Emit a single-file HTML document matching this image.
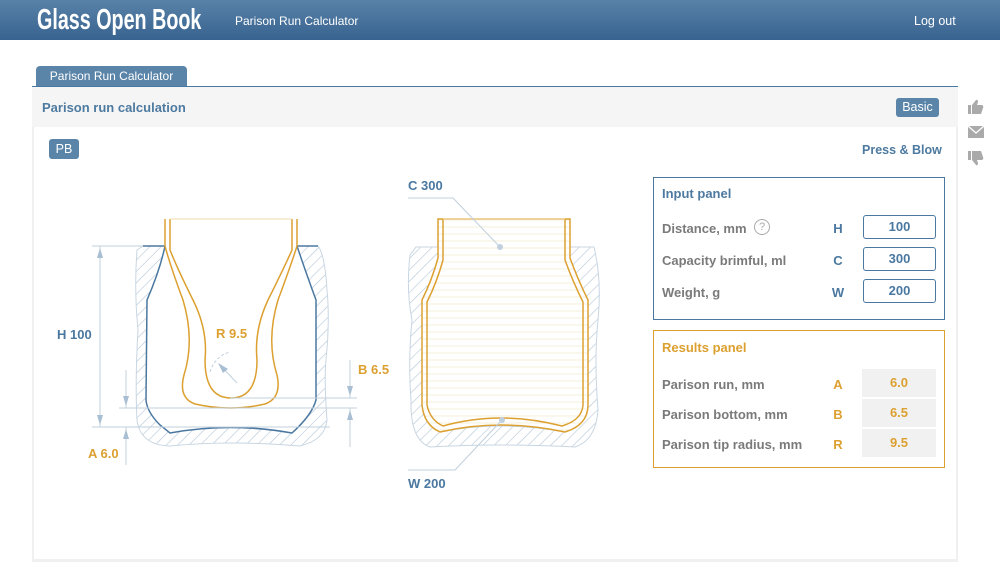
<!DOCTYPE html>
<html><head><meta charset="utf-8"><style>
*{margin:0;padding:0;box-sizing:border-box}
body{width:1000px;height:563px;background:#fff;font-family:"Liberation Sans",sans-serif;position:relative;overflow:hidden}
.hdr{position:absolute;left:0;top:0;width:1000px;height:40px;background:linear-gradient(#5882a7,#386390)}
.logo{position:absolute;left:37px;top:4px;color:#fff;font-family:"Liberation Sans",sans-serif;font-weight:bold;font-size:29px;white-space:nowrap;transform:scaleX(0.68);transform-origin:left}
.t{position:absolute;color:#fff;font-size:12px;white-space:nowrap}
.abs{position:absolute;white-space:nowrap}
.lbl{position:absolute;font-size:13px;font-weight:bold;color:#7a7a7a}
.let{position:absolute;font-size:13px;font-weight:bold;color:#4a78a0;width:20px;text-align:center}
.inp{position:absolute;left:863px;width:73px;height:24px;border:1px solid #4a78a0;border-radius:3px;text-align:center;font-size:13px;font-weight:bold;color:#4a78a0;line-height:22px}
.res{position:absolute;left:862px;width:74px;height:28px;background:#f1f1f1;text-align:center;font-size:13px;font-weight:bold;color:#dca030;line-height:28px}
.y{color:#dca030}
</style></head><body>
<div class="hdr"></div>
<div class="logo">Glass Open Book</div>
<div class="t" style="left:235px;top:14px;font-size:12px">Parison Run Calculator</div>
<div class="t" style="left:914px;top:14px;font-size:12.5px">Log out</div>

<div class="abs" style="left:36px;top:66px;width:151px;height:21px;background:#5a84a8;border-radius:4px 4px 0 0;color:#fff;font-size:12px;text-align:center;line-height:21px">Parison Run Calculator</div>
<div class="abs" style="left:32px;top:86px;width:926px;height:1px;background:#4a78a0"></div>
<div class="abs" style="left:32px;top:87px;width:926px;height:40px;background:#f5f5f5"></div>
<div class="abs" style="left:42px;top:100px;font-size:13px;font-weight:bold;color:#4d7aa0">Parison run calculation</div>
<div class="abs" style="left:896px;top:98px;width:43px;height:19px;background:#5a84a8;border-radius:3px;color:#fff;font-size:12.5px;text-align:center;line-height:19px">Basic</div>
<div class="abs" style="left:32px;top:127px;width:2px;height:435px;background:#f0f0f0"></div>
<div class="abs" style="left:956px;top:127px;width:2px;height:435px;background:#f0f0f0"></div>
<div class="abs" style="left:32px;top:559px;width:926px;height:3px;background:#f0f0f0"></div>

<div class="abs" style="left:49px;top:139px;width:30px;height:20px;background:#5a84a8;border-radius:3px;color:#fff;font-size:12.5px;text-align:center;line-height:20px">PB</div>
<div class="abs" style="left:862px;top:143px;font-size:12.5px;font-weight:bold;color:#4d7aa0">Press &amp; Blow</div>

<svg class="abs" style="left:966px;top:98px" width="20" height="70" viewBox="0 0 20 70">
<g fill="#aaa">
<rect x="2" y="7" width="3" height="9"/><path d="M6 7 L10 2 Q12 1 12 4 L11 7 L16 7 Q18 8 17 10 L15 16 L6 16Z"/>
<path d="M2 28 H18 V40 H2Z"/><path d="M2 28 L10 35 L18 28" fill="none" stroke="#fff" stroke-width="1.3"/>
<rect x="2" y="53" width="3" height="9"/><path d="M6 62 L10 67 Q12 68 12 65 L11 62 L16 62 Q18 61 17 59 L15 53 L6 53Z"/>
</g></svg>

<svg class="abs" style="left:0;top:0" width="650" height="563" viewBox="0 0 650 563">
<defs>
<pattern id="h" width="8" height="8" patternUnits="userSpaceOnUse" patternTransform="rotate(45)">
<rect width="8" height="8" fill="#fff"/><line x1="0" y1="0" x2="0" y2="8" stroke="#b4c6d6" stroke-width="1.2"/></pattern>
<pattern id="hl" width="6" height="7" patternUnits="userSpaceOnUse"><rect width="6" height="7" fill="#fff"/><line x1="0" y1="3" x2="6" y2="3" stroke="#f6efd8" stroke-width="1"/></pattern>
</defs>
<path d="M143 246 L137 250 Q134 290 138 330 Q135 380 137 420 Q140 445 170 446 Q230 440 300 446 Q325 440 327 420 Q324 380 326 360 Q330 320 327 290 Q325 255 318 246Z" fill="url(#h)" stroke="#c8d6e2" stroke-width="1"/>
<path d="M143 246 L165 246 Q160 270 147 300 L146 400 Q147 412 160 425 L170 433 Q230 422 292 433 Q312 415 316 400 L316 300 Q305 270 297 246 L318 246" fill="#fff" stroke="#4a78a0" stroke-width="1.5"/>
<path d="M165 219 L165 246 Q170 265 183 300 Q195 340 184 375 Q178 398 195 404 Q230 412 265 404 Q282 398 277 375 Q266 340 278 300 Q291 265 297 246 L297 219" fill="#fff" stroke="#dca030" stroke-width="1.5"/>
<path d="M170 219 L170 250 Q178 270 193 300 Q208 330 205 360 Q205 398 231 398 Q257 398 257 360 Q254 330 268 300 Q283 270 292 250 L292 219" fill="#fff" stroke="#dca030" stroke-width="1.5"/>
<line x1="170" y1="219" x2="292" y2="219" stroke="#f0d9a8"/>
<g stroke="#c0d0de" stroke-width="1" fill="none">
<line x1="92" y1="246" x2="143" y2="246"/><line x1="92" y1="427" x2="330" y2="427"/>
<line x1="119" y1="408" x2="357" y2="408"/><line x1="230" y1="398" x2="357" y2="398"/>
<line x1="100" y1="246" x2="100" y2="427"/>
<line x1="126" y1="370" x2="126" y2="408"/><line x1="126" y1="427" x2="126" y2="465"/>
<line x1="350" y1="360" x2="350" y2="398"/><line x1="350" y1="408" x2="350" y2="447"/>
<path d="M210 372 Q215 356 230 352" stroke-dasharray="3 2"/>
<line x1="237" y1="383" x2="220" y2="365"/>
</g>
<g fill="#a8bed2">
<path d="M97 258 L100 248 L103 258Z"/><path d="M97 415 L100 425 L103 415Z"/>
<path d="M123 396 L126 406 L129 396Z"/><path d="M123 439 L126 429 L129 439Z"/>
<path d="M347 386 L350 396 L353 386Z"/><path d="M347 420 L350 410 L353 420Z"/>
<path d="M218 363 L228 369 L223 373Z"/>
</g>
<g font-family="Liberation Sans" font-weight="bold" font-size="13">
<text x="57" y="339" fill="#4a78a0">H 100</text>
<text x="88" y="458" fill="#dca030">A 6.0</text>
<text x="358" y="374" fill="#dca030">B 6.5</text>
<text x="216" y="338" fill="#dca030">R 9.5</text>
</g>
<path d="M416 247 L410 255 Q406 290 412 320 Q408 360 411 400 Q410 440 430 447 Q500 443 575 447 Q596 440 598 410 Q594 360 598 320 Q602 280 594 247 L570 247 L570 300 L588 340 L588 400 Q580 425 565 432 Q500 420 440 432 Q425 425 422 400 L422 340 L438 300 L438 247Z" fill="url(#h)" stroke="#c8d6e2" stroke-width="1"/>
<path d="M438 219 L438 258 Q432 280 422 300 L422 405 Q424 425 440 432 Q500 418 565 432 Q588 425 588 405 L588 300 Q578 280 570 258 L570 219Z" fill="url(#hl)" stroke="#dca030" stroke-width="1.5"/>
<path d="M443 219 L443 260 Q437 282 427 302 L427 405 Q430 420 443 426 Q500 410 562 426 Q582 420 583 405 L583 302 Q573 282 565 260 L565 219" fill="none" stroke="#dca030" stroke-width="1.5"/>
<line x1="443" y1="219" x2="565" y2="219" stroke="#f0d9a8"/>
<g stroke="#c0d0de" fill="none"><path d="M408 198 L453 198 L500 247"/><path d="M408 470 L455 470 L502 420"/></g>
<circle cx="500" cy="247" r="3" fill="#c0d0de"/><circle cx="502" cy="420" r="3" fill="#c0d0de"/>
<g font-family="Liberation Sans" font-weight="bold" font-size="13" fill="#4a78a0">
<text x="408" y="190">C 300</text><text x="408" y="488">W 200</text></g>
</svg>

<div class="abs" style="left:653px;top:177px;width:292px;height:143px;border:1px solid #4a78a0"></div>
<div class="abs" style="left:662px;top:186px;font-size:13px;font-weight:bold;color:#4d7aa0">Input panel</div>
<div class="lbl" style="left:662px;top:221px">Distance, mm</div>
<div class="abs" style="left:754px;top:219px;width:16px;height:16px;border:1px solid #aaa;border-radius:50%;color:#aaa;font-size:11px;text-align:center;line-height:14px">?</div>
<div class="let" style="left:828px;top:221px">H</div><div class="inp" style="top:215px">100</div>
<div class="lbl" style="left:662px;top:253px">Capacity brimful, ml</div>
<div class="let" style="left:828px;top:253px">C</div><div class="inp" style="top:247px">300</div>
<div class="lbl" style="left:662px;top:285px">Weight, g</div>
<div class="let" style="left:828px;top:285px">W</div><div class="inp" style="top:279px">200</div>

<div class="abs" style="left:653px;top:330px;width:292px;height:138px;border:1px solid #dca030"></div>
<div class="abs" style="left:662px;top:340px;font-size:13px;font-weight:bold;color:#dca030">Results panel</div>
<div class="lbl" style="left:662px;top:377px">Parison run, mm</div>
<div class="let y" style="left:828px;top:377px">A</div><div class="res" style="top:369px">6.0</div>
<div class="lbl" style="left:662px;top:407px">Parison bottom, mm</div>
<div class="let y" style="left:828px;top:407px">B</div><div class="res" style="top:399px">6.5</div>
<div class="lbl" style="left:662px;top:437px">Parison tip radius, mm</div>
<div class="let y" style="left:828px;top:437px">R</div><div class="res" style="top:429px">9.5</div>
</body></html>
